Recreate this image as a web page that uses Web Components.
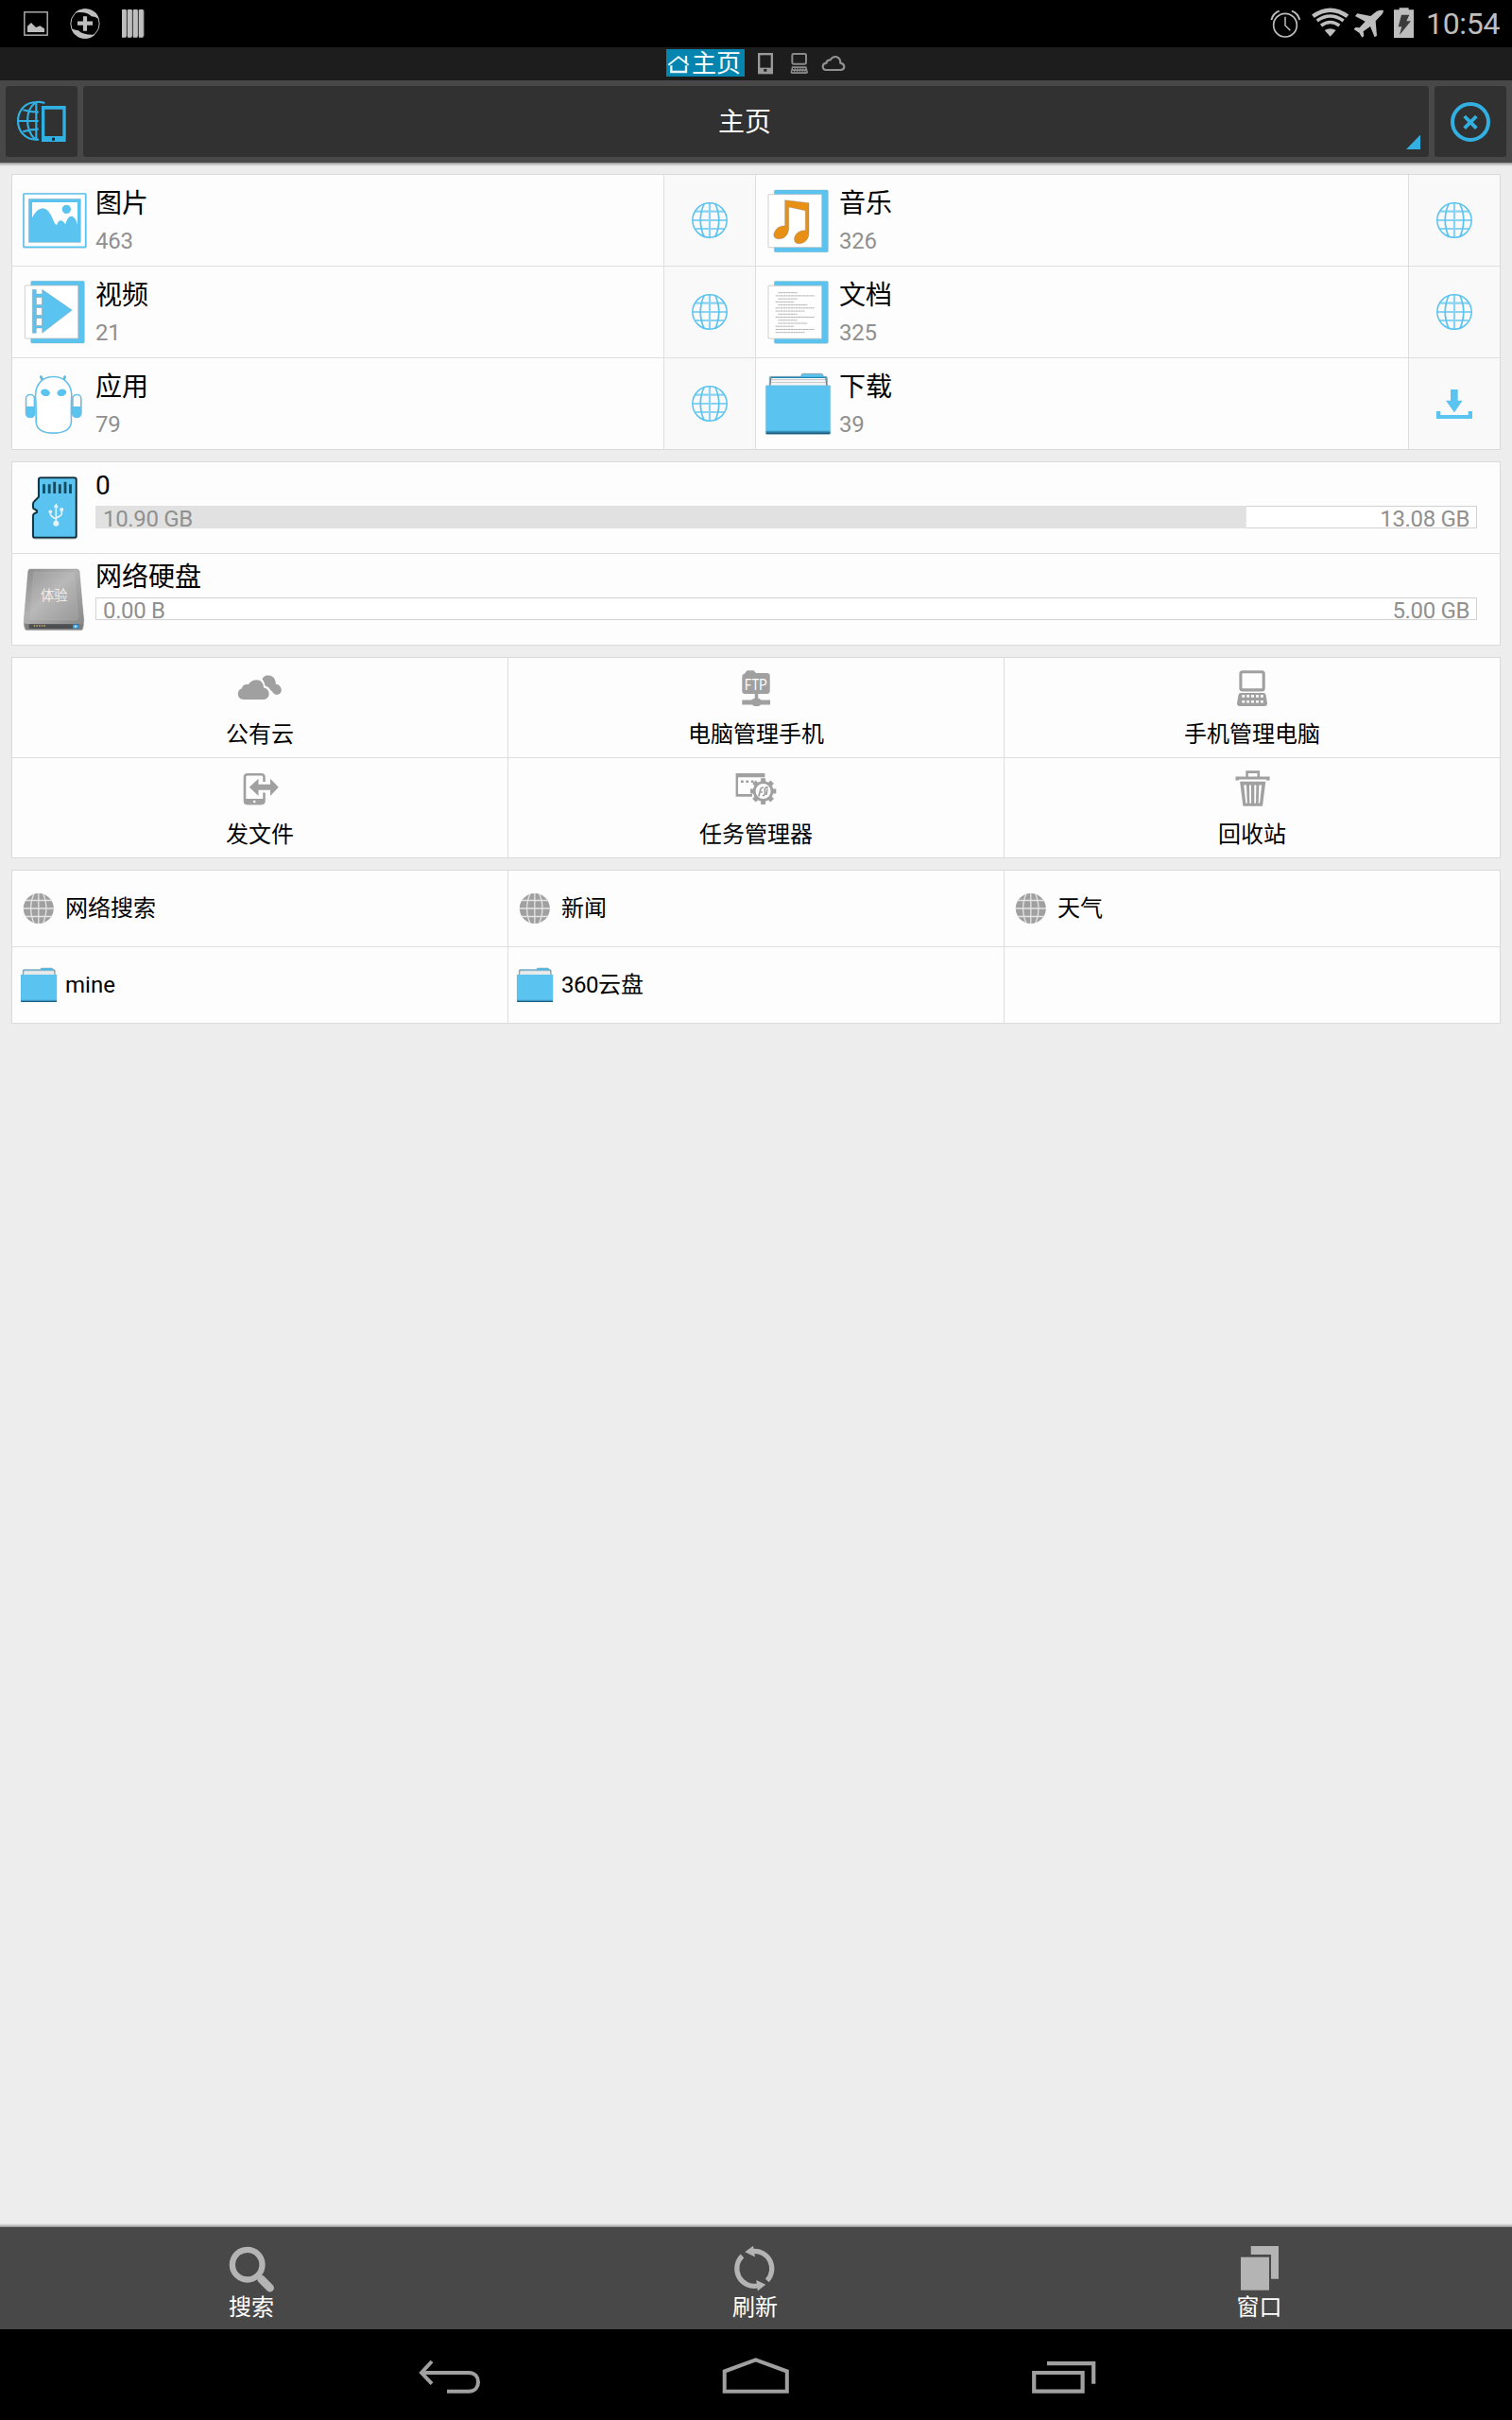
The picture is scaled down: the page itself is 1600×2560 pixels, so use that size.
<!DOCTYPE html>
<html lang="zh-CN">
<head>
<meta charset="utf-8">
<title>主页</title>
<style>
html,body{margin:0;padding:0;background:#ededed}
body{width:1600px;height:2560px;overflow:hidden;font-family:Roboto,"Noto Sans CJK SC",sans-serif;color:#000}
</style>
</head>
<body>
<file-app></file-app>
<script>
const B = '#5ac3f0', T = '#33b0e2', G = '#a0a0a0', S = '#bebebe', L = '#b4b4b4';

const globeLines = `<g fill="none" stroke="${B}"><circle cx="273" cy="159" r="54.5" stroke-width="4.5"/><path d="M256 105C240 140 240 178 256 213M290 105C306 140 306 178 290 213" stroke-width="5"/><path d="M273 104V214M218 159H328M227 131H319M227 186H319" stroke-width="6.5" stroke-opacity=".7"/></g>`;
const sheet = y => `<g transform="translate(0 ${y})"><rect x="478" y="63" width="171" height="197" rx="4" fill="${B}" stroke="#8aa" stroke-opacity=".5" stroke-width="2"/><rect x="459" y="77" width="170" height="168" rx="2" fill="#fff" stroke="#bbb" stroke-opacity=".7" stroke-width="3"/></g>`;
const folder = `<path d="M463 690V659Q463 655 467 655H563Q563 646 570 646H628Q633 646 634 655H642Q646 655 646 659V690Z" fill="${B}" stroke="#888" stroke-width="2"/><path d="M464 690L468 657H641L645 690Z" fill="#f6f8f9"/><path d="M468 658H640" stroke="#2487b3" stroke-width="4"/><path d="M467 665H642M466 674H643" stroke="#c4c4c4" stroke-width="3"/><path d="M464 690L468 657M645 690L641 657" stroke="#777" stroke-width="3"/><rect x="451" y="683" width="205" height="155" rx="3" fill="${B}" stroke="#8ab" stroke-width="1"/><path d="M452 829H655" stroke="#3a93bb" stroke-width="4"/><path d="M452 835H655" stroke="#1d5f80" stroke-width="6"/>`;

const docLines = (() => {
  const rows = [[490,551],[482,606],[490,551],[482,541],[490,583],[482,606],[482,574],[490,551],[482,606],[490,551],[490,583],[482,541],[482,606],[482,574]];
  return rows.map((r, i) => `<path d="M${r[0]} ${389 + i * 9.7}H${r[1]}"/>`).join('');
})();

// name: [width, height, viewBox, drawing]
const ICONS = {
  stPic: [32,50,'66 0 96 150', `<rect x="77.500" y="38.500" width="73" height="73" fill="none" stroke="${S}" stroke-width="4"/><path d="M87 102V83L99 72L114 87L127 82L141 91V102Z" fill="${S}"/>`],
  stPlus: [38,50,'213 0 114 150', `<circle cx="270" cy="75" r="45.500" fill="none" stroke="${S}" stroke-width="3"/><path d="M238 40Q258 23 284 29Q310 37 314 61Q303 52 290 52Q277 36 238 40ZM302 110Q282 127 256 121Q232 112 227 91Q237 96 249 97Q263 112 302 110Z" fill="${S}"/><path d="M270 52V98M246 74H294" stroke="${S}" stroke-width="12.500"/>`],
  stBars: [30,50,'381 0 90 150', [390,408,426,444].map(x => `<path d="M${x} 32Q${x} 30 ${x+2} 30H${x+13}L${x+15} 34V114L${x+12} 119H${x}Z" fill="${S}"/><path d="M${x+15.5} 32V114L${x+12} 119" stroke="#777" stroke-width="2.500" fill="none"/>`).join('')],
  alarm: [40,50,'120 0 120 150', `<g fill="none" stroke="${S}"><circle cx="180" cy="80" r="37" stroke-width="5"/><path d="M180 53V81L196 97" stroke-width="4.500"/><path d="M136 63Q142 42 161 35M226 63Q220 42 201 35" stroke-width="6"/></g>`],
  wifi: [44,50,'258 0 132 150', `<g fill="none" stroke="${S}"><path d="M268 52Q323 12 378 52" stroke-width="13"/><path d="M281 66Q323 36 365 66" stroke-width="11"/><path d="M294 81Q323 60 352 81" stroke-width="11"/></g><path d="M266 50L284 71M380 50L362 71" stroke="#000" stroke-width="1"/><path d="M305 96Q323 86 341 96L323 116Z" fill="${S}"/>`],
  plane: [40,50,'387 0 120 150', `<path d="M492 33Q492 39 487 46L467 67L471 113L464 118L450 84L428 100L430 114L424 119L415 104L398 93L403 87L416 88L434 68L402 51L409 43L451 51L470 36Q482 31 492 33Z" fill="${S}"/>`],
  batt: [34,50,'507 0 102 150', `<path d="M542 25H572V31H588V120H525V31H542Z" fill="${S}"/><path d="M549 47H574L565 67H579L543 111L550 85H539Z" fill="#3b3b3b"/>`],
  tabHome: [28,29,'132 156 84 87', `<g fill="none" stroke="#e9f6fb"><path d="M142 206L174 181L206 206" stroke-width="6"/><path d="M151 208V228H198V208" stroke-width="7"/><path d="M198 177V198" stroke-width="7"/></g>`],
  tabPhone: [39,35,'384 150 117 105', `<rect x="429.500" y="171.500" width="41" height="60" fill="none" stroke="#999" stroke-width="7"/><rect x="426" y="215" width="48" height="19" fill="#999"/><rect x="445" y="219" width="9" height="8" fill="#1d1d1d"/>`],
  tabLap: [35,35,'501 150 105 105', `<rect x="535" y="171" width="44" height="32" rx="4" fill="none" stroke="#8a8a8a" stroke-width="6"/><path d="M534 211H580L585 229Q585 234 580 234H534Q529 234 530 229Z" fill="#8a8a8a"/><path d="M537 218H578M535 227H580" stroke="#1d1d1d" stroke-width="4" stroke-dasharray="5 3.500"/>`],
  tabCloud: [38,35,'606 150 114 105', `<path d="M643 222Q632 222 632 211Q633 201 643 200Q645 190 656 190Q662 179 674 180Q688 183 688 200Q700 203 700 212Q699 222 688 222Z" fill="none" stroke="#909090" stroke-width="6.500"/>`],
  webPhone: [76,75,'18 273 228 225', `<g fill="none" stroke="${T}" stroke-width="6.500"><path d="M142 327Q128 322 114 324C80 325 57 350 57 384C57 418 82 443 114 443H123"/><path d="M115 324V443M57 384H122M73 349Q96 356 122 356M73 418Q96 410 122 410M112 326C80 350 78 412 112 442"/></g><path d="M132 336H209V450H132ZM142 347V432H199V347Z" fill="${T}" fill-rule="evenodd"/><rect x="165" y="437" width="9" height="9" fill="#222"/>`],
  corner: [15,15,'564 428 45 45', `<path d="M609 427V473H564Z" fill="${T}"/>`],
  close: [76,75,'654 273 228 225', `<circle cx="768" cy="387" r="57" fill="none" stroke="${T}" stroke-width="12"/><path d="M749 369L787 407M787 369L749 407" stroke="${T}" stroke-width="11.500"/>`],
  pic: [88,96,'39 15 264 288', `<rect x="75" y="75" width="197" height="169" rx="2" fill="#fff" stroke="${B}" stroke-width="5"/><rect x="73" y="73" width="202" height="174" rx="3" fill="none" stroke="#8ab" stroke-opacity=".5" stroke-width="1.500"/><rect x="91" y="91" width="165" height="138" fill="${B}" stroke="#9ab" stroke-opacity=".6" stroke-width="2"/><path d="M102 102H246V174Q240 147 227 146Q214 146 208 172Q200 160 192 160Q185 160 180 174Q174 172 168 157Q155 121 135 121Q116 123 102 151Z" fill="#fff"/><circle cx="211" cy="124" r="14" fill="${B}"/>`],
  vid: [88,96,'39 306 264 288', `<rect x="98" y="352" width="170" height="197" rx="4" fill="${B}" stroke="#8aa" stroke-opacity=".5" stroke-width="2"/><rect x="79" y="366" width="169" height="168" rx="2" fill="#fff" stroke="#bbb" stroke-opacity=".7" stroke-width="3"/><path d="M103 379H115V393H134V379L229 444L134 517V501H115V517H103Z" fill="${B}" stroke="#8899a0" stroke-opacity=".6" stroke-width="2"/><g fill="#fff" stroke="#a9a9a9" stroke-width="2"><rect x="115" y="404" width="18" height="23"/><rect x="115" y="437" width="18" height="23"/><rect x="115" y="470" width="18" height="23"/></g>`],
  app: [88,96,'39 597 264 288', `<g stroke="#7b9cab" stroke-width="8" stroke-linecap="round"><path d="M130 656L136 668M206 656L201 668"/></g><g stroke="${B}" stroke-width="6" stroke-linecap="round"><path d="M130 656L136 668M206 656L201 668"/></g><g fill="#fff" stroke="#7b8c95" stroke-opacity=".5" stroke-width="6"><rect x="83" y="713" width="26" height="71" rx="12"/><rect x="231" y="713" width="26" height="71" rx="12"/></g><g fill="#fff" stroke="${B}" stroke-width="4"><rect x="83" y="713" width="26" height="71" rx="12"/><rect x="231" y="713" width="26" height="71" rx="12"/></g><path d="M82 750H111V774Q109 786 97 786Q83 785 82 772ZM229 750H258V772Q256 785 243 786Q230 785 229 774Z" fill="${B}"/><path d="M113 716C113 678 136 656 170 656C204 656 227 680 227 716C225 745 226 780 226 798C224 824 200 834 170 834C140 834 116 824 115 798C115 780 115 745 113 716Z" fill="#fff" stroke="#888" stroke-width="6" stroke-opacity=".5"/><path d="M113 716C113 678 136 656 170 656C204 656 227 680 227 716C225 745 226 780 226 798C224 824 200 834 170 834C140 834 116 824 115 798C115 780 115 745 113 716Z" fill="#fff" stroke="${B}" stroke-width="4"/><ellipse cx="144" cy="706" rx="15" ry="11" transform="rotate(14 144 706)" fill="${B}"/><ellipse cx="196" cy="706" rx="15" ry="11" transform="rotate(-14 196 706)" fill="${B}"/>`],
  mus: [88,96,'420 15 264 288', sheet(0) + `<path d="M512 95L588 104V198C588 222 573 233 556 233C543 233 540 224 542 214C546 199 560 190 577 191V128L524 117V186C522 209 508 219 491 218C477 218 474 208 478 198C484 184 496 176 512 177Z" fill="#e89015" stroke="#777" stroke-opacity=".5" stroke-width="2"/>`],
  doc: [88,96,'420 306 264 288', sheet(289.5) + `<g stroke="#b0b0b0" stroke-width="3" stroke-dasharray="7 1">${docLines}</g>`],
  dir: [88,96,'420 597 264 288', folder],
  globe: [96,96,'129 15 288 288', globeLines],
  dl: [96,96,'273 597 288 288', `<path d="M405 696H428V731H443L417 769L390 731H405Z" fill="${B}"/><path d="M360 765H373V777H461V765H474V789H360Z" fill="${B}"/>`],
  sd: [88,96,'39 27 264 288', `<path d="M129 77H236Q242 77 242 83V262Q242 268 236 268H111Q105 268 105 262V196Q105 192 109 190L117 186V180L110 176Q105 174 105 170V159Q105 155 109 151L123 137V83Q123 77 129 77Z" fill="none" stroke="#000" stroke-opacity=".2" stroke-width="8"/><path d="M129 76H236Q242 76 242 82V260Q242 266 236 266H111Q105 266 105 260V196Q105 192 109 190L117 186V180L110 176Q105 174 105 170V159Q105 155 109 151L123 137V82Q123 76 129 76Z" fill="${B}" stroke="#0b2c3a" stroke-width="5.500"/><path d="M139.500 97V126M156.500 97V126M173 89V126M190 97V126M207 89V126M223.500 97V126" stroke="#154c62" stroke-width="8.500"/><g stroke="#e8f2f6" fill="none" stroke-width="5"><path d="M178 165V220M160 184V192Q160 198 178 207M196 181V190Q196 197 178 204"/></g><g fill="#e8f2f6"><path d="M178 157L186 170H170Z"/><circle cx="178" cy="221" r="9"/><circle cx="160" cy="184" r="5.500"/><rect x="190" y="172" width="11" height="10"/></g>`],
  disk: [88,96,'39 318 264 288', `<defs><linearGradient id="a" x1="0" y1="0" x2="1" y2="1"><stop offset="0" stop-color="#8c8c8c"/><stop offset=".45" stop-color="#b2b2b2"/><stop offset="1" stop-color="#8a8a8a"/></linearGradient></defs><path d="M96 366H244Q250 366 252 373L266 530Q267 542 263 556Q262 560 257 560H86Q80 560 79 556Q74 542 76 530L89 373Q90 366 96 366Z" fill="#7f7f7f" stroke="#bbb" stroke-width="2"/><path d="M97 367H243Q249 367 251 374L266 526Q267 540 258 540H84Q75 540 76 526L90 374Q91 367 97 367Z" fill="url(#a)"/><path d="M108 376H236L247 521Q247 527 241 527H99Q93 527 94 521Z" fill="#fff" fill-opacity=".09" stroke="#b9b9b9" stroke-opacity=".5" stroke-width="2"/><rect x="92" y="541" width="158" height="14" rx="2" fill="#4d5052"/><path d="M107 546H144" stroke="#a08c5c" stroke-width="6" stroke-dasharray="5 3"/><rect x="231" y="542" width="18" height="12" rx="3" fill="#3aa8ef"/><circle cx="240" cy="548" r="3.500" fill="#bfe6ff"/><text x="129" y="464" font-size="43" fill="#ececec" textLength="86">体验</text>`],
  cloud: [50,40,'250 708 50 40', `<path d="M283.500 714.300C288 714.300 292 718 291.800 723.500C296 724.500 297.800 727.500 297.800 730C297.500 734.500 294 735 291 734.800L285.500 729C285 727.500 283.500 726.500 280.500 725.500C280 722 278.500 719.500 277.500 718.500C278.500 716 280.500 714.300 284 714.300Z" fill="${G}"/><path d="M258 740C253.500 740 251.800 737 251.800 734C251.800 731 253.500 729 256 728.300C256 725.500 258.500 723.500 263 724C264.500 721 268 719.300 271.500 719.300C276 719.300 279 722.500 279 727.500C282.500 728 284.600 730.500 284.600 734C284.600 738 281.500 740 278 740Z" fill="${G}" stroke="#fdfdfd" stroke-width="1" paint-order="stroke"/>`],
  ftp: [50,40,'775 708 50 40', `<path d="M785.300 716Q785.300 713 788 712.500L790.500 709.300H797.500L800 712H811.500Q814.700 712 814.700 715V731Q814.700 734 811.500 734H788.500Q785.300 734 785.300 731Z" fill="${G}"/><path d="M800.500 734V741" stroke="${G}" stroke-width="3.500"/><path d="M785.300 740.500H795L798 738.700H803L805.500 740.500H815V745.500H805L803 747H798L796 745.500H785.300Z" fill="${G}"/><text x="788" y="729.500" font-size="16" textLength="23.500" lengthAdjust="spacingAndGlyphs" fill="#fff">FTP</text>`],
  laptop: [50,40,'1300 708 50 40', `<rect x="1312.900" y="710.700" width="24.300" height="19.200" rx="2" fill="none" stroke="${G}" stroke-width="3.100"/><path d="M1313 733H1337Q1339 733 1339.500 735L1341 744Q1341 747 1338 747H1312Q1309 747 1309 744L1310.500 735Q1311 733 1313 733Z" fill="${G}"/><path d="M1314.300 736.400H1337M1314.300 742.200H1337" stroke="#fdfdfd" stroke-width="2.600" stroke-dasharray="2.900 2"/>`],
  send: [50,40,'250 814 50 40', `<path d="M279.500 827V822Q279.500 819.300 276.500 819.300H262Q259 819.300 259 822V847Q259 850 262 850H276.500Q279.500 850 279.500 847V838.500" fill="none" stroke="${G}" stroke-width="2.600"/><path d="M258 845H280V849Q279 851.300 276 851.300H262Q258 851 258 848Z" fill="${G}"/><circle cx="269.200" cy="848" r="1.300" fill="#fff"/><path d="M263.800 832.700L273.500 823.700V829.700H286V823.700L294.800 832.700L286 842V835.700H273.500V842Z" fill="${G}"/>`],
  task: [50,40,'775 814 50 40', `<path d="M778.600 818H809.400V822.300H781V840H796V842.700H778.600Z" fill="${G}"/><path d="M784 826.700H798" stroke="${G}" stroke-width="2.600" stroke-dasharray="2.800 2.600"/><circle cx="807.600" cy="837" r="12.200" fill="#fdfdfd"/><g stroke="${G}" stroke-width="5"><path d="M807.600 823.300V828M807.600 846V851M794 837H799M816.500 837H821.300M798 827.300L801.500 831M813.500 843L817.200 846.800M817.200 827.300L813.500 831M801.500 843L798 846.800"/></g><circle cx="807.600" cy="837" r="9.400" fill="none" stroke="${G}" stroke-width="2.800"/><path d="M802.800 842.500L805 834.500Q805.500 833 808 833M803.800 838H807M812.800 832.800H811Q809.500 833 809.300 835L809.500 839Q809.300 842 806.800 841.500M811.900 834.500L811 841" fill="none" stroke="${G}" stroke-width="1.700"/>`],
  trash: [50,40,'1300 814 50 40', `<path d="M1319.600 822V816.600H1331.800V822" fill="none" stroke="${G}" stroke-width="2.600"/><path d="M1307.500 821.500H1343.600V825.500H1340V824.600H1311V825.500H1307.500Z" fill="${G}"/><path d="M1312.100 826.700H1339.300L1336 852.700H1315.400ZM1316.200 830.500L1318.300 849.800H1319.800L1319 830.500ZM1322 830.500L1322.300 849.800H1324L1323.900 830.500ZM1327.300 830.500V849.800H1329L1329.400 830.500ZM1332.300 830.500L1331.700 849.800H1333L1335.200 830.500Z" fill="${G}" fill-rule="evenodd"/>`],
  ball: [56,80,'13 921 56 80', `<circle cx="40.800" cy="961" r="16" fill="#a0a0a0"/><g fill="none" stroke="#e4e4e4" stroke-width="1.300"><path d="M40.800 945V977M25 961H57M27 952.500H55M27 969.500H55M36 945.500C31.500 955 31.500 967 36 976.500M45.600 945.500C50 955 50 967 45.600 976.500"/></g>`],
  miniDir: [56,80,'13 1002 56 80', `<g transform="translate(22 1024) scale(.1859 .1870) translate(-451 -646)">${folder}</g>`],
  search: [60,56,'236.700 2370 60 56', `<circle cx="261.400" cy="2395.700" r="15.800" fill="none" stroke="${L}" stroke-width="6.300"/><path d="M276.200 2411L285.400 2420.200" stroke="${L}" stroke-width="8.500" stroke-linecap="round"/>`],
  refresh: [60,56,'770 2370 60 56', `<g fill="none" stroke="${L}" stroke-width="5.200"><path d="M796 2381.500A18.500 18.500 0 0 1 811.800 2412.500"/><path d="M785.500 2386.500A18.500 18.500 0 0 0 802 2418"/></g><path d="M788.300 2382.300L797 2375.800L799 2387.500ZM810.300 2416.800L800.300 2412L801.800 2423.500Z" fill="${L}"/>`],
  windows: [60,56,'1303.300 2370 60 56', `<rect x="1313.300" y="2387.700" width="30" height="35" fill="${L}"/><path d="M1324 2376H1353.300V2410.700H1345.300V2385H1324Z" fill="${L}"/>`],
  back: [80,96,'436 2464 80 96', `<g fill="none" stroke="${G}" stroke-width="4"><path d="M446 2510H496C503 2510 506 2515 506 2520C506 2525 503 2529.700 496 2529.700H473"/><path d="M457 2498L446 2510L457 2521.700"/></g>`],
  home: [80,96,'760 2464 80 96', `<path d="M766.700 2529.700V2508.500L799.700 2496.300L832.800 2508.500V2529.700Z" fill="none" stroke="${G}" stroke-width="4"/>`],
  recent: [80,96,'1084 2464 80 96', `<path d="M1094.200 2510H1145.600V2529.700H1094.200ZM1108 2500.200H1157.200V2521.700" fill="none" stroke="${G}" stroke-width="4.200"/>`]
};

function define(tag, css, html) {
  customElements.define(tag, class extends HTMLElement {
    constructor() {
      super();
      const t = document.createElement('template');
      t.innerHTML = `<style>${css}</style>${html}`;
      this.attachShadow({ mode: 'open' }).appendChild(t.content.cloneNode(true));
    }
  });
}

customElements.define('app-icon', class extends HTMLElement {
  connectedCallback() {
    if (this.shadowRoot) return;
    const [w, h, box, body] = ICONS[this.getAttribute('name')];
    this.attachShadow({ mode: 'open' }).innerHTML =
      `<style>:host{display:block;flex:none;width:${w}px;height:${h}px}svg{display:block;font-family:Roboto,"Noto Sans CJK SC",sans-serif}</style><svg width="${w}" height="${h}" viewBox="${box}">${body}</svg>`;
  }
});

define('status-bar', `
:host{display:flex;height:50px;background:#000;color:#bebebe;justify-content:space-between}
div{display:flex}
.l{padding-left:22px;gap:17px}
.r{width:260px}
.t{font-size:32px;line-height:51px;margin-left:6px;letter-spacing:-.3px}`,
`<div class="l"><app-icon name="stPic"></app-icon><app-icon name="stPlus"></app-icon><app-icon name="stBars"></app-icon></div>
<div class="r"><app-icon name="alarm"></app-icon><app-icon name="wifi" style="margin-left:6px"></app-icon><app-icon name="plane" style="margin-left:-1px"></app-icon><app-icon name="batt"></app-icon><span class="t">10:54</span></div>`);

define('tab-strip', `
:host{display:flex;height:35px;background:#1d1d1d;padding-left:704px}
.on{display:flex;width:84px;height:29px;margin-top:2px;background:linear-gradient(#0485b0,#0485b0) .6px 0/83px 100% no-repeat;color:#fff;font-size:26px;line-height:31px}
.on span{white-space:nowrap}`,
`<div class="on"><app-icon name="tabHome"></app-icon><span>主页</span></div><app-icon name="tabPhone"></app-icon><app-icon name="tabLap"></app-icon><app-icon name="tabCloud"></app-icon>`);

define('title-bar', `
:host{display:flex;box-sizing:border-box;height:87px;background:#484848;padding:6px;gap:6px}
.b{background:#313131;border-radius:3px;height:75px}
.m{flex:1;display:grid;grid-template-columns:24px 1fr 24px;color:#fff;font-size:28px;line-height:77px;text-align:center}
.m span{height:75px}
.m app-icon{align-self:end;margin-bottom:8px}`,
`<div class="b"><app-icon name="webPhone"></app-icon></div><div class="b m"><i></i><span style="margin-right:24px">主页</span><app-icon name="corner"></app-icon></div><div class="b"><app-icon name="close"></app-icon></div>`);

define('card-panel', `
:host{display:grid;grid-template-columns:var(--cols,1fr);gap:1px;background:#dedede;border:1px solid #dadada}`, `<slot></slot>`);

define('media-cell', `
:host{display:flex;height:96px;background:#fdfdfd}
.t{padding-top:14px}
.n{font-size:28px;line-height:34px}
.c{font-size:24px;line-height:28px;margin-top:8px;color:#909090;letter-spacing:-.3px}`,
`<slot name="icon"></slot><div class="t"><div class="n"><slot></slot></div><div class="c"><slot name="count"></slot></div></div>`);

define('side-cell', `:host{display:block;height:96px;background:#f9f9f9}`, `<slot></slot>`);

customElements.define('storage-row', class extends HTMLElement {
  connectedCallback() {
    if (this.shadowRoot) return;
    const a = n => this.getAttribute(n);
    this.attachShadow({ mode: 'open' }).innerHTML = `<style>
:host{display:flex;height:96px;background:#fdfdfd}
.t{flex:1;padding:8px 24px 0 0}
.n{font-size:28px;line-height:34px}
.bar{box-sizing:border-box;display:flex;justify-content:space-between;height:24px;margin-top:4px;padding:0 7px;border:1px solid #d2d2d2;font-size:24px;line-height:26px;letter-spacing:-.35px;color:#909090;background:linear-gradient(#e1e1e1,#e1e1e1) 0 0/${a('fill')} 100% no-repeat border-box #fff}
.bar.used{border-image:linear-gradient(90deg,#e1e1e1 83.300%,#d2d2d2 83.300%) 1}
</style><app-icon name="${a('icon')}"></app-icon><div class="t"><div class="n"><slot></slot></div><div class="bar ${a('fill') === '0' ? '' : 'used'}"><span>${a('used')}</span><span>${a('total')}</span></div></div>`;
  }
});

define('tool-cell', `
:host{display:flex;flex-direction:column;align-items:center;box-sizing:border-box;height:105px;padding-top:12px;background:#fdfdfd;font-size:24px;line-height:28px}
div{margin-top:15px}`, `<slot name="icon"></slot><div><slot></slot></div>`);

define('link-cell', `
:host{display:flex;height:80px;background:#fdfdfd;font-size:24px;line-height:80px}`, `<slot></slot>`);

define('bottom-bar', `
:host{display:grid;grid-template-columns:533px 533px 534px;height:108px;background:#484848;color:#fff}
div{display:flex;flex-direction:column;align-items:center;padding-top:14px;font-size:24px;line-height:28px}
span{margin:1px 1px 0 0}`,
`<div><app-icon name="search"></app-icon><span>搜索</span></div><div><app-icon name="refresh"></app-icon><span>刷新</span></div><div><app-icon name="windows"></app-icon><span>窗口</span></div>`);

define('nav-bar', `:host{display:flex;height:96px;background:#000;padding-left:436px;gap:244px}`,
`<app-icon name="back"></app-icon><app-icon name="home"></app-icon><app-icon name="recent"></app-icon>`);

const media = (i, n, c, s) => `<media-cell><app-icon slot="icon" name="${i}"></app-icon>${n}<span slot="count">${c}</span></media-cell><side-cell><app-icon name="${s}"></app-icon></side-cell>`;
const tool = (i, n) => `<tool-cell><app-icon slot="icon" name="${i}"></app-icon>${n}</tool-cell>`;
const link = (i, n) => `<link-cell><app-icon name="${i}"></app-icon><span>${n}</span></link-cell>`;

define('file-app', `
:host{display:flex;flex-direction:column;width:1600px;height:2560px}
main{flex:1;display:flex;flex-direction:column;gap:12px;padding:12px;background:linear-gradient(#8d8d8d,#c9c9c9 2px,#ededed 4px,#ededed calc(100% - 4px),#c9c9c9 calc(100% - 2px),#8d8d8d)}
.media{--cols:689px 96px 690px 96px}
.three{--cols:repeat(3,524px)}`,
`<status-bar></status-bar><tab-strip></tab-strip><title-bar></title-bar>
<main>
<card-panel class="media">${media('pic','图片','463','globe')}${media('mus','音乐','326','globe')}${media('vid','视频','21','globe')}${media('doc','文档','325','globe')}${media('app','应用','79','globe')}${media('dir','下载','39','dl')}</card-panel>
<card-panel><storage-row icon="sd" fill="83.3%" used="10.90 GB" total="13.08 GB">0</storage-row><storage-row icon="disk" fill="0" used="0.00 B" total="5.00 GB">网络硬盘</storage-row></card-panel>
<card-panel class="three">${tool('cloud','公有云')}${tool('ftp','电脑管理手机')}${tool('laptop','手机管理电脑')}${tool('send','发文件')}${tool('task','任务管理器')}${tool('trash','回收站')}</card-panel>
<card-panel class="three">${link('ball','网络搜索')}${link('ball','新闻')}${link('ball','天气')}${link('miniDir','mine')}${link('miniDir','<span style="letter-spacing:-.5px">360</span>云盘')}<link-cell></link-cell></card-panel>
</main>
<bottom-bar></bottom-bar><nav-bar></nav-bar>`);
</script>
</body>
</html>
